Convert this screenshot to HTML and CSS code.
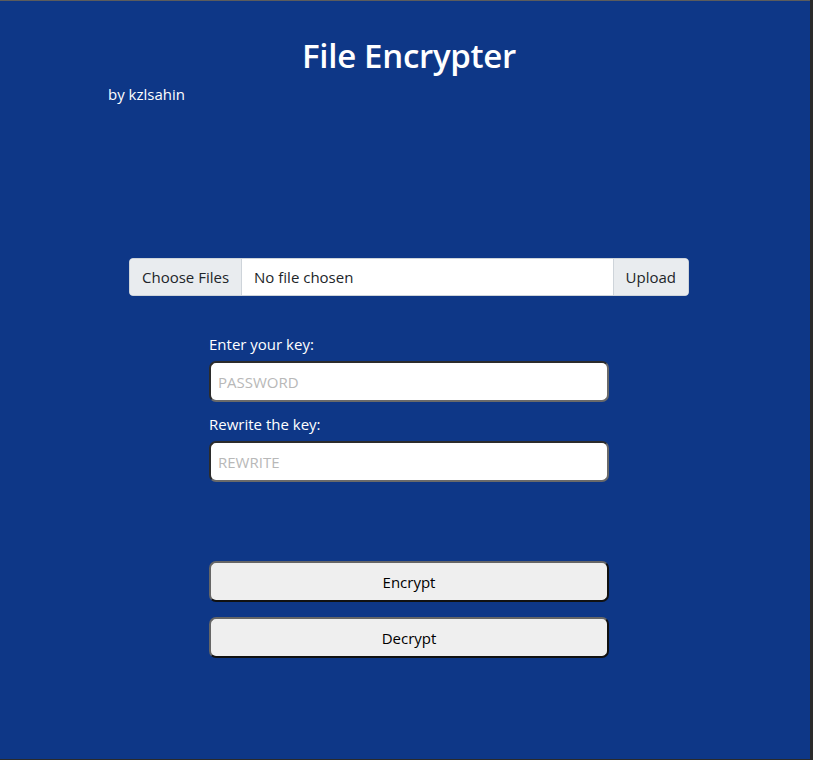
FILE: index.html
```html
<!DOCTYPE html>
<html>
<head>
<meta charset="utf-8">
<link rel="stylesheet" href="styles.css">
</head>
<body>
<div class="page">
  <header class="head">
    <h1 class="title">File Encrypter</h1>
    <p class="author">by kzlsahin</p>
  </header>
  <div class="upload">
    <span class="choose">Choose Files</span>
    <span class="filename">No file chosen</span>
    <span class="upbtn">Upload</span>
  </div>
  <form class="keys">
    <label class="lbl">Enter your key:</label>
    <input class="field" type="password" placeholder="PASSWORD">
    <label class="lbl">Rewrite the key:</label>
    <input class="field" type="password" placeholder="REWRITE">
    <div class="actions">
      <button type="button" class="btn">Encrypt</button>
      <button type="button" class="btn">Decrypt</button>
    </div>
  </form>
</div>
</body>
</html>
```
FILE: styles.css
```css
html { background: #2a2a2a; }
body { margin: 0; font-family: "Segoe UI", "Open Sans", "Noto Sans", sans-serif; }
.page {
  width: 810px;
  height: 759px;
  box-sizing: border-box;
  padding-left: 8px;
  background: #0e3787;
  border-top: 1px solid #5c5c5c;
  color: #fff;
  display: flex;
  flex-direction: column;
  align-items: center;
}
.head { width: 100%; }
.title {
  margin: 35px 0 0;
  text-align: center;
  font-size: 33px;
  font-weight: 600;
  line-height: 40px;
  letter-spacing: -0.3px;
}
.author {
  margin: 8px 0 0 100px;
  font-size: 15px;
  line-height: 20px;
}
.upload {
  margin-top: 154px;
  width: 560px;
  height: 38px;
  display: flex;
  background: #fff;
  border-radius: 4px;
  border: 1px solid #ced4da;
  box-sizing: border-box;
  font-size: 15px;
  color: #212529;
  overflow: hidden;
}
.choose, .upbtn {
  background: #e9ecef;
  display: flex;
  align-items: center;
  padding: 0 12px;
}
.choose { border-right: 1px solid #ced4da; }
.upbtn { border-left: 1px solid #ced4da; margin-left: auto; }
.filename { display: flex; align-items: center; padding-left: 12px; }
.keys {
  margin-top: 38px;
  width: 400px;
  display: flex;
  flex-direction: column;
}
.lbl { font-size: 15px; line-height: 20px; margin-bottom: 7px; }
.field {
  height: 41px;
  box-sizing: border-box;
  border: 2px solid #2c2c2c;
  border-right-color: #6a6a6a;
  border-bottom-color: #6a6a6a;
  border-radius: 7px;
  padding: 0 7px;
  font-family: inherit;
  font-size: 15px;
  margin-bottom: 12px;
  outline: none;
}
.field::placeholder { color: #b8b8b8; }
.actions { margin-top: 67px; display: flex; flex-direction: column; gap: 15px; }
.btn {
  height: 41px;
  background: #efefef;
  border: 2px solid #111;
  border-top-color: #666;
  border-left-color: #666;
  border-radius: 7px;
  font-family: inherit;
  font-size: 15px;
  color: #000;
}
```
